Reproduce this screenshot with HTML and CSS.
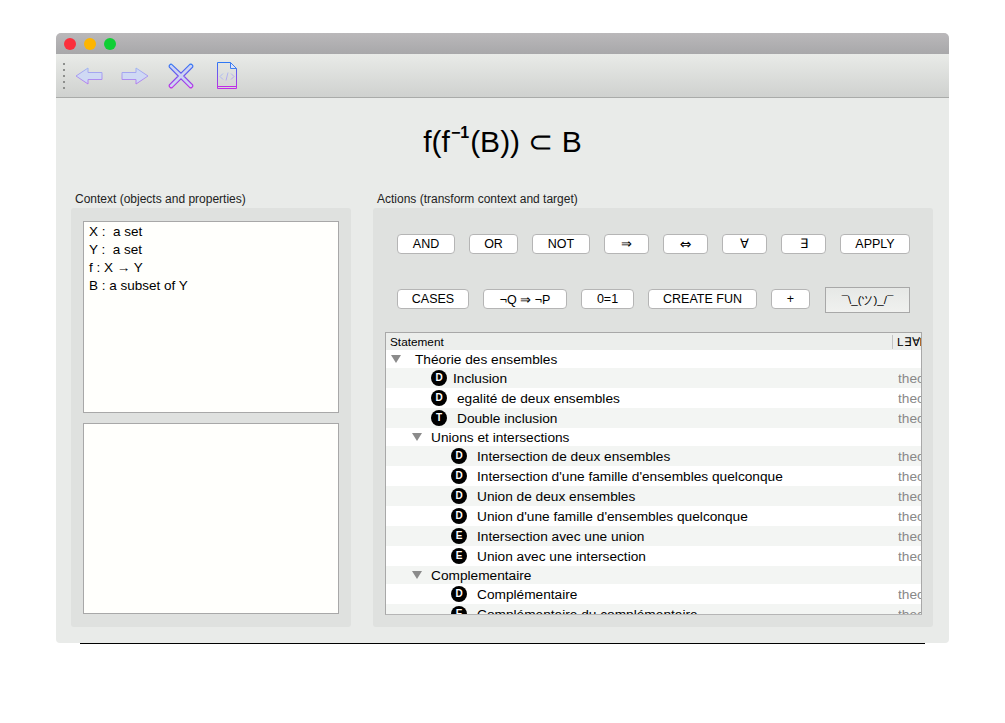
FILE: index.html
```html
<!DOCTYPE html>
<html>
<head>
  <meta charset="UTF-8">
  <title>Deaduction</title>
  <link rel="stylesheet" href="styles.css">
</head>
<body>
  <div id="window">
    <div id="titlebar">
      <span class="light red"></span>
      <span class="light yellow"></span>
      <span class="light green"></span>
    </div>

    <div id="toolbar">
      <div class="grip"><i></i><i></i><i></i><i></i><i></i></div>

      <svg class="tool tool-back" width="28" height="20" viewBox="0 0 28 20">
        <defs>
          <linearGradient id="grad" x1="0" y1="0" x2="0" y2="1">
            <stop offset="0" stop-color="#2f78f4"/>
            <stop offset="1" stop-color="#c02ee6"/>
          </linearGradient>
          <linearGradient id="grad-line" x1="0" y1="0" x2="0" y2="1">
            <stop offset="0" stop-color="#9fb6f2"/>
            <stop offset="1" stop-color="#b47cee"/>
          </linearGradient>
          <linearGradient id="grad-soft" x1="0" y1="0" x2="1" y2="1">
            <stop offset="0" stop-color="#a9c4f2"/>
            <stop offset="1" stop-color="#b99af0"/>
          </linearGradient>
        </defs>
        <path d="M1 10 L13 2 V6.5 H27 V13.5 H13 V18 Z" fill="#cfd9f4" stroke="url(#grad-line)" stroke-width="1" stroke-linejoin="round"/>
      </svg>

      <svg class="tool tool-next" width="28" height="20" viewBox="0 0 28 20">
        <path d="M27 10 L15 2 V6.5 H1 V13.5 H15 V18 Z" fill="#cfd9f4" stroke="url(#grad-line)" stroke-width="1" stroke-linejoin="round"/>
      </svg>

      <svg class="tool tool-x" width="26" height="26" viewBox="0 0 28 28">
        <path d="M4 1.500 L14 11 L23.500 1.500 Q24.500 1 25.500 1.500 L26.500 2.500 Q27 3.500 26.500 4.500 L17 14 L26.500 23.500 Q27 24.500 26.500 25.500 L25.500 26.500 Q24.500 27 23.500 26.500 L14 17 L4.500 26.500 Q3.500 27 2.500 26.500 L1.500 25.500 Q1 24.500 1.500 23.500 L11 14 L1.500 4.500 Q1 3.500 1.500 2.500 L2.500 1.500 Q3.500 1 4 1.500 Z" fill="#cdd3f2" stroke="url(#grad)" stroke-width="1.300"/>
      </svg>

      <svg class="tool tool-doc" width="20" height="27" viewBox="0 0 20 27">
        <path d="M.5 .5 H13.500 L19.500 6.500 V26.500 H.5 Z" fill="none" stroke="url(#grad)" stroke-width="1"/>
        <path d="M13.500 .5 V6.500 H19.500 Z" fill="#dfe3f6" stroke="#3f7ff0" stroke-width="1"/>
        <path d="M.5 24.500 H19.500" stroke="#c02ee6" stroke-width="1"/>
        <path d="M6 11.500 L3 14.500 L6 17.500 M14 11.500 L17 14.500 L14 17.500 M11 10.500 L9 18.500" fill="none" stroke="url(#grad-soft)" stroke-width="1"/>
      </svg>
    </div>

    <h1 id="target">f(f<sup>−1</sup>(B)) ⊂ B</h1>

    <div id="main">
      <section id="context">
        <div class="panel-title">Context (objects and properties)</div>
        <div class="panel">
          <ul class="box objects">
            <li>X :&nbsp; a set</li>
            <li>Y :&nbsp; a set</li>
            <li>f : X → Y</li>
            <li>B : a subset of Y</li>
          </ul>
          <div class="box"></div>
        </div>
      </section>

      <section id="actions">
        <div class="panel-title">Actions (transform context and target)</div>
        <div class="panel">
          <div class="btn-row row-one">
            <button class="btn w-58">AND</button>
            <button class="btn w-49">OR</button>
            <button class="btn w-58">NOT</button>
            <button class="btn w-45">⇒</button>
            <button class="btn w-45 btn-symbol">⇔</button>
            <button class="btn w-45">∀</button>
            <button class="btn w-45">∃</button>
            <button class="btn w-70">APPLY</button>
          </div>
          <div class="btn-row row-two">
            <button class="btn w-72">CASES</button>
            <button class="btn w-84">¬Q ⇒ ¬P</button>
            <button class="btn w-53">0=1</button>
            <button class="btn w-109">CREATE FUN</button>
            <button class="btn w-39">+</button>
            <button class="btn btn-flat">¯\_(ツ)_/¯</button>
          </div>

          <div id="tree">
            <div class="tree-head">
              <span class="col-name">Statement</span>
              <span class="col-level">L∃∀EL</span>
            </div>

            <div class="row group depth-0"><span class="caret"></span><span class="name">Théorie des ensembles</span></div>
            <div class="row leaf depth-1"><span class="badge">D</span><span class="name near">Inclusion</span><span class="kind">theorie</span></div>
            <div class="row leaf depth-1"><span class="badge">D</span><span class="name">egalité de deux ensembles</span><span class="kind">theorie</span></div>
            <div class="row leaf depth-1"><span class="badge">T</span><span class="name">Double inclusion</span><span class="kind">theorie</span></div>
            <div class="row group depth-1"><span class="caret"></span><span class="name">Unions et intersections</span></div>
            <div class="row leaf depth-2"><span class="badge">D</span><span class="name">Intersection de deux ensembles</span><span class="kind">theorie</span></div>
            <div class="row leaf depth-2"><span class="badge">D</span><span class="name">Intersection d'une famille d'ensembles quelconque</span><span class="kind">theorie</span></div>
            <div class="row leaf depth-2"><span class="badge">D</span><span class="name">Union de deux ensembles</span><span class="kind">theorie</span></div>
            <div class="row leaf depth-2"><span class="badge">D</span><span class="name">Union d'une famille d'ensembles quelconque</span><span class="kind">theorie</span></div>
            <div class="row leaf depth-2"><span class="badge">E</span><span class="name">Intersection avec une union</span><span class="kind">theorie</span></div>
            <div class="row leaf depth-2"><span class="badge">E</span><span class="name">Union avec une intersection</span><span class="kind">theorie</span></div>
            <div class="row group depth-1"><span class="caret"></span><span class="name">Complementaire</span></div>
            <div class="row leaf depth-2"><span class="badge">D</span><span class="name">Complémentaire</span><span class="kind">theorie</span></div>
            <div class="row leaf depth-2"><span class="badge">E</span><span class="name">Complémentaire du complémentaire</span><span class="kind">theorie</span></div>
          </div>
        </div>
      </section>
    </div>
  </div>
  <div id="baseline"></div>
</body>
</html>
```

FILE: styles.css
```css
body {
  margin: 0;
  background: #fff;
  color: #000;
  font-family: "Liberation Sans", Arial, sans-serif;
  overflow: hidden;
}

#window {
  width: 893px;
  height: 610px;
  margin: 33px 0 0 56px;
  background: #e9ebe9;
  border-radius: 5px 5px 4px 4px;
  overflow: hidden;
}

#baseline {
  width: 845px;
  height: 1px;
  margin-left: 80px;
  background: #000;
}

/* title bar */
#titlebar {
  height: 21px;
  display: flex;
  align-items: center;
  gap: 8px;
  padding-left: 8px;
  background: linear-gradient(#bab8ba, #a8a8aa);
}

.light {
  width: 12px;
  height: 12px;
  border-radius: 50%;
}

.red { background: #fb2f3c; }
.yellow { background: #fdb500; }
.green { background: #10cf35; }

/* toolbar */
#toolbar {
  height: 43px;
  display: flex;
  align-items: center;
  background: linear-gradient(#e9ebe8, #cfd1cf);
  border-bottom: 1px solid #a9aba9;
}

.grip {
  display: flex;
  flex-direction: column;
  gap: 4px;
  margin-left: 7px;
}

.grip i {
  display: block;
  width: 2px;
  height: 2px;
  background: #8d8f8d;
}

.tool { flex: none; }
.tool-back { margin-left: 10px; }
.tool-next { margin-left: 18px; }
.tool-x { margin-left: 19px; }
.tool-doc { margin-left: 23px; }

/* target */
#target {
  margin: 0;
  height: 90px;
  line-height: 88px;
  text-align: center;
  font-size: 30px;
  font-weight: normal;
}

#target sup {
  margin: 0 1px;
  font-size: 16px;
  font-weight: bold;
  line-height: 0;
  vertical-align: 14px;
}

/* panels */
#main {
  display: flex;
  gap: 22px;
  padding-left: 15px;
}

.panel-title {
  height: 20px;
  line-height: 22px;
  padding-left: 4px;
  font-size: 12px;
  color: #222;
}

.panel {
  height: 419px;
  box-sizing: border-box;
  background: #dfe1df;
  border-radius: 3px;
}

#context { width: 280px; }

#context .panel {
  padding: 13px 12px;
  display: flex;
  flex-direction: column;
  gap: 10px;
}

.box {
  height: 192px;
  box-sizing: border-box;
  margin: 0;
  padding: 1px 5px;
  list-style: none;
  background: #fffffc;
  border: 1px solid #a8a8a8;
}

.objects li {
  height: 18px;
  line-height: 18px;
  font-size: 13.5px;
}

#actions { width: 560px; }

#actions .panel {
  padding: 26px 11px 0 12px;
}

/* buttons */
.btn-row {
  display: flex;
  align-items: center;
  gap: 14px;
  padding-left: 12px;
}

.row-one { height: 19px; margin-bottom: 33px; }
.row-two { height: 26px; margin-bottom: 20px; }

.btn {
  height: 20px;
  padding: 0;
  font-family: inherit;
  font-size: 12.5px;
  color: #000;
  background: #fff;
  border: 1px solid #b5b5b5;
  border-radius: 4px;
}

.btn-symbol {
  font-family: "DejaVu Sans", sans-serif;
  font-size: 14px;
}

.btn-flat {
  width: 85px;
  height: 26px;
  margin: 2px 0 0 1px;
  font-size: 11.5px;
  background: linear-gradient(#e6e8e6, #f0f1ef);
  border-color: #a8a8a8;
  border-radius: 0;
}

.w-39 { width: 39px; }
.w-45 { width: 45px; }
.w-49 { width: 49px; }
.w-53 { width: 53px; }
.w-58 { width: 58px; }
.w-70 { width: 70px; }
.w-72 { width: 72px; }
.w-84 { width: 84px; }
.w-109 { width: 109px; }

/* statement tree */
#tree {
  height: 283px;
  box-sizing: border-box;
  overflow: hidden;
  background: #fff;
  border: 1px solid #a8a8a8;
  border-bottom-color: #b5b5b5;
}

.tree-head {
  height: 17px;
  display: flex;
  align-items: center;
  font-size: 11.8px;
  background: #eceeec;
}

.col-name {
  flex: 1;
  padding-left: 4px;
}

.col-level {
  width: 24px;
  height: 14px;
  line-height: 14px;
  padding-left: 4px;
  overflow: hidden;
  white-space: nowrap;
  border-left: 1px solid #c4c4c4;
}

.row {
  display: flex;
  align-items: center;
  font-size: 13.7px;
  white-space: nowrap;
}

.row:nth-child(odd) { background: #f3f5f3; }
.group { height: 18px; }
.leaf { height: 20px; }

.row .name { flex: 1; }

.group.depth-0 { padding-left: 5px; }
.group.depth-0 .caret { margin-right: 14px; }
.group.depth-1 { padding-left: 26px; }
.group.depth-1 .caret { margin-right: 9px; }
.leaf.depth-1 { padding-left: 45px; }
.leaf.depth-2 { padding-left: 65px; }

.caret {
  width: 0;
  height: 0;
  border-left: 5px solid transparent;
  border-right: 5px solid transparent;
  border-top: 8px solid #8b8b8b;
}

.badge {
  flex: none;
  width: 16px;
  height: 16px;
  margin-right: 10px;
  border-radius: 50%;
  background: #000;
  color: #fff;
  font-size: 10px;
  font-weight: bold;
  line-height: 16px;
  text-align: center;
}

.badge + .near { margin-left: -4px; }

.kind {
  flex: none;
  width: 23px;
  overflow: hidden;
  color: #888;
}
```
